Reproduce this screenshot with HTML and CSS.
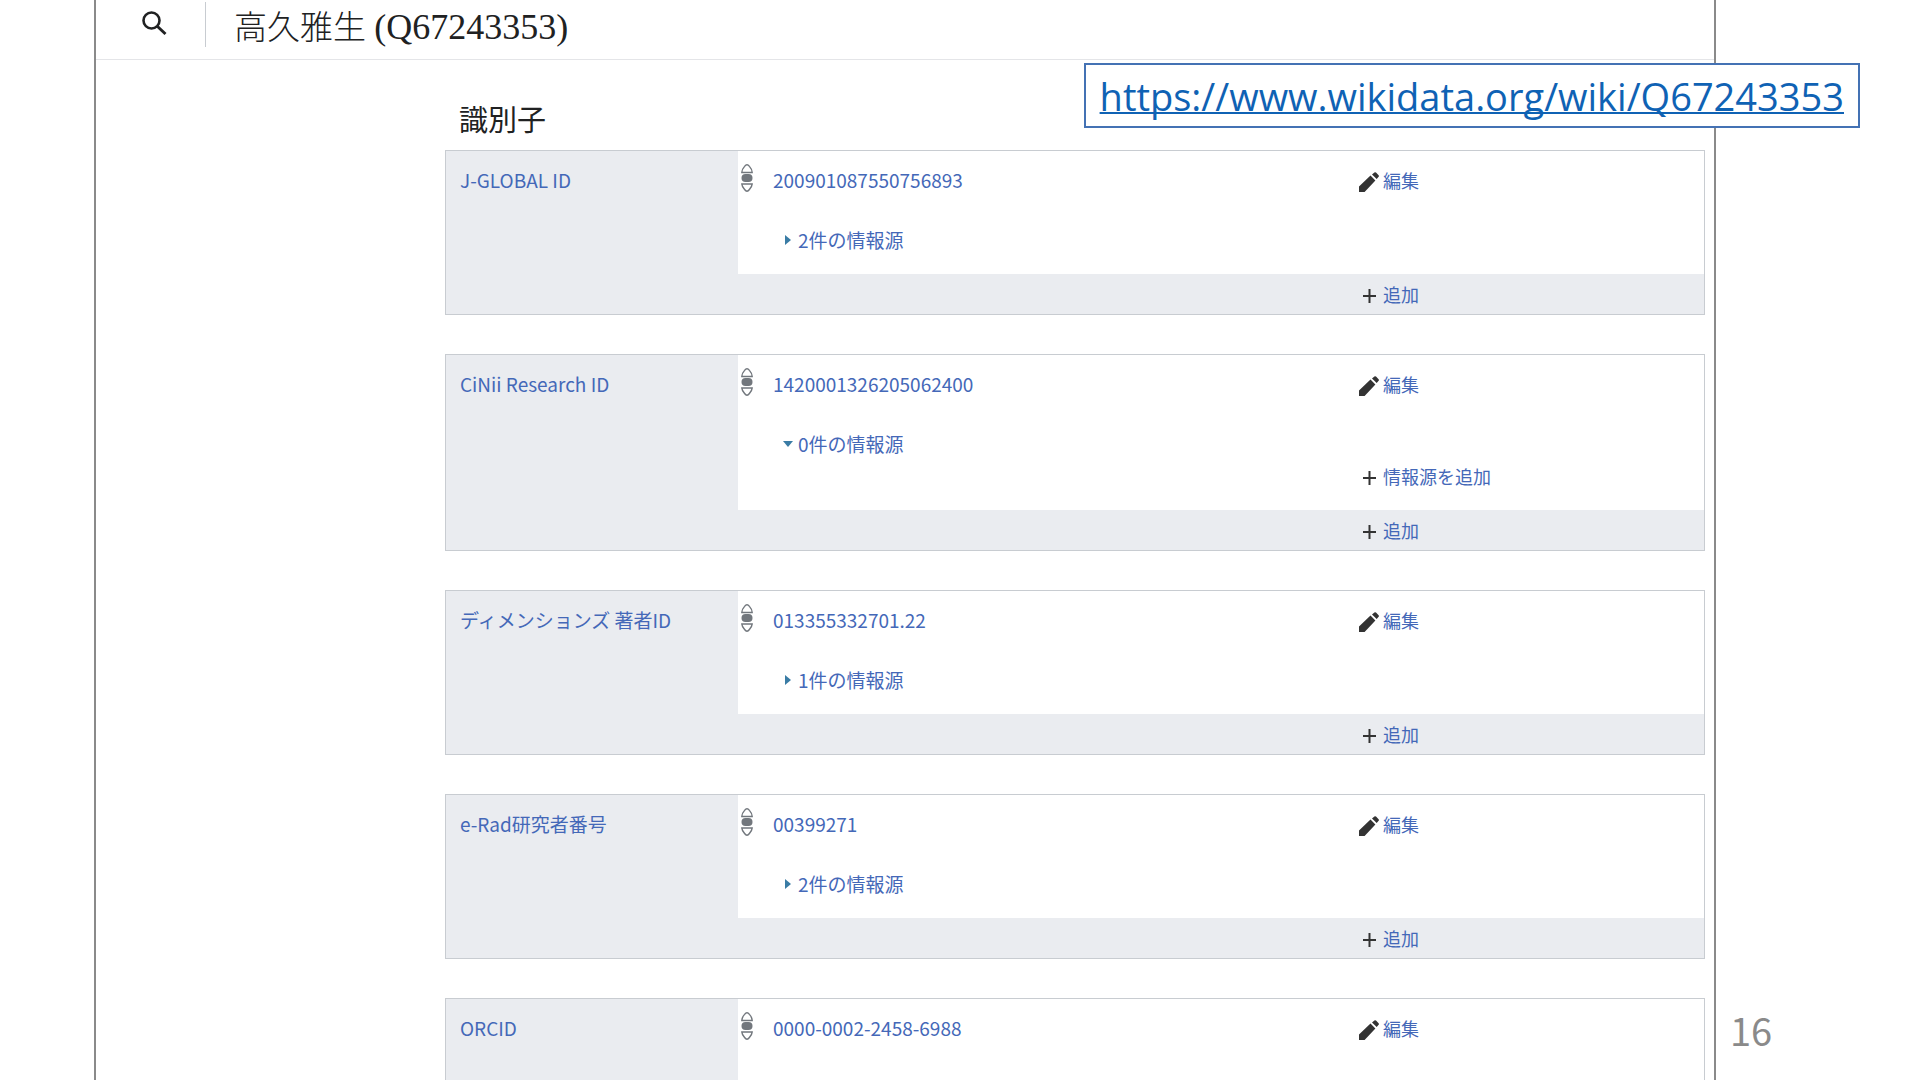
FILE: index.html
```
<!DOCTYPE html>
<html lang="ja">
<head>
    <meta charset="UTF-8">
    <title>高久雅生 (Q67243353)</title>
    <link rel="stylesheet" href="styles.css">
</head>
<body>

<svg class="symbols" aria-hidden="true">
    <symbol id="icon-rank" viewBox="0 0 12 28">
        <path d="M0.8 8.5 Q0.8 5.5 3.6 2.4 Q4.8 0.7 6 0.7 Q7.2 0.7 8.4 2.4 Q11.2 5.5 11.2 8.5 Z" fill="#fff" stroke="#72777d" stroke-width="1.4"/>
        <rect x="0.5" y="10" width="11" height="8" rx="4" fill="#72777d"/>
        <path d="M0.8 20 H11.2 Q11.2 22 8.4 25.5 Q7.2 27.3 6 27.3 Q4.8 27.3 3.6 25.5 Q0.8 22 0.8 20 Z" fill="#fff" stroke="#72777d" stroke-width="1.4"/>
    </symbol>
    <symbol id="icon-edit" viewBox="0 0 20 20">
        <path d="M0 20 V14.4 L11.5 3.6 L16.4 8.4 L5.6 20 Z M13 2.4 L15.4 0.4 Q16.2 -0.2 17 0.6 L19.6 3.2 Q20.3 4 19.6 4.8 L17.7 7 Z" fill="#333"/>
    </symbol>
    <symbol id="icon-add" viewBox="0 0 20 20">
        <path d="M4 10 H17 M10.5 3 V17" fill="none" stroke="#333" stroke-width="2"/>
    </symbol>
</svg>

<div class="slide">
    <main class="page">
        <header class="page-header">
            <button class="search" aria-label="検索">
                <svg width="26" height="26" viewBox="0 0 26 26">
                    <circle cx="10.5" cy="10.5" r="8" fill="none" stroke="#202122" stroke-width="2.6"/>
                    <path d="M16 16 L24.5 24" stroke="#202122" stroke-width="3"/>
                </svg>
            </button>
            <h1>高久雅生 <span class="entity-id">(Q67243353)</span></h1>
        </header>

        <section class="statements">
            <h2>識別子</h2>

            <div class="statement-group">
                <div class="property"><a href="#">J-GLOBAL ID</a></div>
                <div class="statement">
                    <button class="rank" aria-label="ランク"><svg><use href="#icon-rank"/></svg></button>
                    <a class="value" href="#">200901087550756893</a>
                    <button class="tool"><svg><use href="#icon-edit"/></svg>編集</button>
                    <button class="references">2件の情報源</button>
                </div>
                <div class="group-footer">
                    <button class="tool"><svg><use href="#icon-add"/></svg>追加</button>
                </div>
            </div>

            <div class="statement-group">
                <div class="property"><a href="#">CiNii Research ID</a></div>
                <div class="statement">
                    <button class="rank" aria-label="ランク"><svg><use href="#icon-rank"/></svg></button>
                    <a class="value" href="#">1420001326205062400</a>
                    <button class="tool"><svg><use href="#icon-edit"/></svg>編集</button>
                    <button class="references open">0件の情報源</button>
                    <button class="tool add-reference"><svg><use href="#icon-add"/></svg>情報源を追加</button>
                </div>
                <div class="group-footer">
                    <button class="tool"><svg><use href="#icon-add"/></svg>追加</button>
                </div>
            </div>

            <div class="statement-group">
                <div class="property"><a href="#">ディメンションズ 著者ID</a></div>
                <div class="statement">
                    <button class="rank" aria-label="ランク"><svg><use href="#icon-rank"/></svg></button>
                    <a class="value" href="#">013355332701.22</a>
                    <button class="tool"><svg><use href="#icon-edit"/></svg>編集</button>
                    <button class="references">1件の情報源</button>
                </div>
                <div class="group-footer">
                    <button class="tool"><svg><use href="#icon-add"/></svg>追加</button>
                </div>
            </div>

            <div class="statement-group">
                <div class="property"><a href="#">e-Rad研究者番号</a></div>
                <div class="statement">
                    <button class="rank" aria-label="ランク"><svg><use href="#icon-rank"/></svg></button>
                    <a class="value" href="#">00399271</a>
                    <button class="tool"><svg><use href="#icon-edit"/></svg>編集</button>
                    <button class="references">2件の情報源</button>
                </div>
                <div class="group-footer">
                    <button class="tool"><svg><use href="#icon-add"/></svg>追加</button>
                </div>
            </div>

            <div class="statement-group">
                <div class="property"><a href="#">ORCID</a></div>
                <div class="statement last">
                    <button class="rank" aria-label="ランク"><svg><use href="#icon-rank"/></svg></button>
                    <a class="value" href="#">0000-0002-2458-6988</a>
                    <button class="tool"><svg><use href="#icon-edit"/></svg>編集</button>
                </div>
            </div>
        </section>
    </main>

    <div class="slide-number">16</div>

    <div class="url-box">
        <a href="https://www.wikidata.org/wiki/Q67243353">https://www.wikidata.org/wiki/Q67243353</a>
    </div>
</div>

</body>
</html>
```
FILE: styles.css
```
* {
    box-sizing: border-box;
}

body {
    margin: 0;
    background: #fff;
    color: #202122;
    font-family: 'Noto Sans CJK JP', sans-serif;
    font-size: 19px;
    line-height: 28px;
}

a {
    color: #4468b8;
    text-decoration: none;
}

a:hover {
    text-decoration: underline;
}

button {
    padding: 0;
    border: none;
    background: none;
    color: #4468b8;
    font: inherit;
    cursor: pointer;
}

.symbols {
    display: none;
}

.slide {
    position: relative;
    display: flex;
    height: 100vh;
    overflow: hidden;
    padding-left: 94px;
}

.page {
    flex: 1;
    overflow: hidden;
    border-left: 2px solid #8a8a8a;
    border-right: 2px solid #8a8a8a;
}

/* header */
.page-header {
    display: flex;
    height: 60px;
    padding: 2px 0 12px 45px;
    border-bottom: 1px solid #e4e5e8;
}

.search {
    display: flex;
    align-items: center;
    width: 65px;
    padding-bottom: 3px;
    border-right: 1px solid #c8ccd1;
}

h1 {
    margin: 0;
    padding-left: 28px;
    font-family: 'Liberation Serif', 'Noto Sans CJK JP', serif;
    font-size: 33px;
    font-weight: 300;
    line-height: 50px;
}

.entity-id {
    font-size: 36px;
}

/* statements */
.statements {
    padding: 36px 9px 0 349px;
}

h2 {
    margin: 0 0 10px;
    padding-left: 14px;
    font-size: 29px;
    font-weight: 400;
    line-height: 44px;
}

.statement-group {
    display: grid;
    grid-template-columns: 292px 1fr;
    margin-bottom: 39px;
    border: 1px solid #c8ccd1;
    background: #eaecf0;
}

.property {
    grid-row: span 2;
    padding: 15px 14px;
}

.statement {
    display: grid;
    grid-template-columns: 35px 1fr 345px;
    padding: 15px 0 20px;
    background: #fff;
}

.last {
    padding-bottom: 80px;
}

.rank {
    width: 12px;
    height: 28px;
    margin: -2px 0 0 3px;
}

.rank svg {
    display: block;
    width: 12px;
    height: 28px;
}

.value {
    justify-self: start;
}

.references {
    display: flex;
    align-items: center;
    grid-column: 2;
    justify-self: start;
    height: 28px;
    margin-top: 32px;
    padding-left: 12px;
}

.references::before {
    content: '';
    margin-right: 7px;
    border: 5px solid transparent;
    border-left: 6px solid #3a7ca5;
    border-right: none;
}

.references.open::before {
    margin: 0 5px 0 -2px;
    border: 5px solid transparent;
    border-top: 6px solid #3a7ca5;
    border-bottom: none;
}

.tool {
    display: flex;
    align-items: center;
    justify-self: start;
    gap: 4px;
    height: 28px;
    font-size: 18px;
}

.tool svg {
    width: 20px;
    height: 20px;
    margin-top: 4px;
}

/* sits on its own line below the reference toggle */
.add-reference {
    grid-row: 3;
    grid-column: 3;
    margin-top: 4px;
}

.group-footer {
    display: flex;
    align-items: center;
    justify-content: flex-end;
    height: 40px;
}

.group-footer .tool {
    width: 345px;
}

.slide-number {
    align-self: flex-end;
    width: 204px;
    padding: 0 0 26px 14px;
    color: #8a8a8a;
    font-size: 38px;
    line-height: 48px;
}

/* link on top of the page frame */
.url-box {
    position: absolute;
    top: 63px;
    right: 60px;
    padding: 4px 14px 3px;
    border: 2px solid #4472b4;
    background: #fff;
    font-family: 'Open Sans', sans-serif;
    font-size: 38px;
    line-height: 54px;
}

.url-box a {
    color: #0f62b4;
    text-decoration: underline;
    text-decoration-thickness: 2px;
    text-decoration-skip-ink: none;
}
```
